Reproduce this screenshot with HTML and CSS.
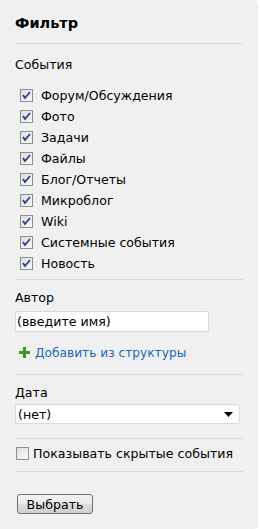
FILE: index.html
```html
<!DOCTYPE html>
<html lang="ru">
<head>
  <meta charset="UTF-8">
  <title>Фильтр</title>
  <link rel="stylesheet" href="styles.css">
</head>
<body>
  <div class="panel">
    <h3 class="title">Фильтр</h3>
    <div class="sep sep-top"></div>

    <div class="label">События</div>
    <ul class="events">
      <li><label><input type="checkbox" checked> Форум/Обсуждения</label></li>
      <li><label><input type="checkbox" checked> Фото</label></li>
      <li><label><input type="checkbox" checked> Задачи</label></li>
      <li><label><input type="checkbox" checked> Файлы</label></li>
      <li><label><input type="checkbox" checked> Блог/Отчеты</label></li>
      <li><label><input type="checkbox" checked> Микроблог</label></li>
      <li><label><input type="checkbox" checked> Wiki</label></li>
      <li><label><input type="checkbox" checked> Системные события</label></li>
      <li><label><input type="checkbox" checked> Новость</label></li>
    </ul>
    <div class="sep sep-events"></div>

    <div class="label">Автор</div>
    <input type="text" class="author" value="(введите имя)">
    <a href="#" class="add-link">
      <svg class="plus" width="11" height="11" viewBox="0 0 11 11"><path d="M4 0h3v4h4v3H7v4H4V7H0V4h4z" fill="#3a9a1c"/></svg>
      Добавить из структуры
    </a>
    <div class="sep sep-author"></div>

    <div class="label">Дата</div>
    <div class="select">
      <span>(нет)</span>
      <svg width="9" height="5" viewBox="0 0 9 5"><path d="M0 0h9L4.5 5z" fill="#000"/></svg>
    </div>
    <div class="sep sep-date"></div>

    <label class="hidden-ev"><input type="checkbox"> Показывать скрытые события</label>
    <div class="sep sep-hidden"></div>

    <button class="submit">Выбрать</button>
  </div>
</body>
</html>
```

FILE: styles.css
```css
html, body {
  margin: 0;
  padding: 0;
  background: #fff;
}

body {
  font-family: 'DejaVu Sans', Verdana, sans-serif;
  font-size: 12.6px;
  color: #000;
}

.panel {
  width: 258px;
  height: 529px;
  box-sizing: border-box;
  background: #f0f0f0;
  border-radius: 0 5px 5px 0;
  padding: 13px 14px 0 15px;
}

.title {
  margin: 0;
  font-size: 14.5px;
  line-height: 20px;
  font-weight: bold;
}

.sep {
  border-top: 1px solid #dcdcdc;
}

.sep-top { margin: 10px 0 12px; }
.sep-events { margin: 5px 0 9px; }
.sep-author { margin: 11px 0 9px; }
.sep-date { margin: 14px 0 8px; }
.sep-hidden { margin: 11px 0 22px; }

.label {
  line-height: 18px;
}

.events {
  list-style: none;
  margin: 11px 0 0;
  padding: 0 0 0 5px;
}

.events li {
  height: 21px;
  line-height: 21px;
}

label {
  display: flex;
  align-items: center;
}

input[type="checkbox"] {
  appearance: none;
  width: 13px;
  height: 13px;
  margin: 0 8px 0 0;
  border: 1px solid #8e8f8f;
  box-sizing: border-box;
  background: linear-gradient(135deg, #dcdcdc, #fbfbfb);
  flex: none;
}

input[type="checkbox"]:checked {
  background: url("data:image/svg+xml,%3Csvg xmlns='http://www.w3.org/2000/svg' width='11' height='11'%3E%3Cpath d='M2 5l2 3 5-6' fill='none' stroke='%232a3e8c' stroke-width='1.8'/%3E%3C/svg%3E") center no-repeat, linear-gradient(135deg, #dcdcdc, #fbfbfb);
}

.author {
  display: block;
  width: 194px;
  height: 21px;
  margin: 4px 0 0;
  padding: 0 1px;
  box-sizing: border-box;
  border: 1px solid #dadada;
  border-radius: 2px;
  background: #fff;
  font: inherit;
  color: #000;
}

.add-link {
  display: flex;
  align-items: center;
  margin: 10px 0 0 4px;
  height: 21px;
  font-size: 12.2px;
  color: #2067b5;
  text-decoration: none;
}

.plus {
  margin-right: 5px;
}

.select {
  display: flex;
  align-items: center;
  justify-content: space-between;
  width: 225px;
  height: 20px;
  margin-top: 2px;
  padding: 0 6px 0 2px;
  box-sizing: border-box;
  background: #fff;
  border: 1px solid #dadada;
  border-radius: 2px;
}

.hidden-ev {
  height: 13px;
}

.hidden-ev input[type="checkbox"] {
  margin: 0 4px 0 1px;
}

.submit {
  display: block;
  margin: 0 0 0 2px;
  width: 76px;
  height: 20px;
  padding: 0;
  font: inherit;
  color: #000;
  border: 1px solid #707070;
  border-radius: 3px;
  background: linear-gradient(#f2f2f2, #ebebeb 50%, #dddddd 51%, #cfcfcf);
}
```
